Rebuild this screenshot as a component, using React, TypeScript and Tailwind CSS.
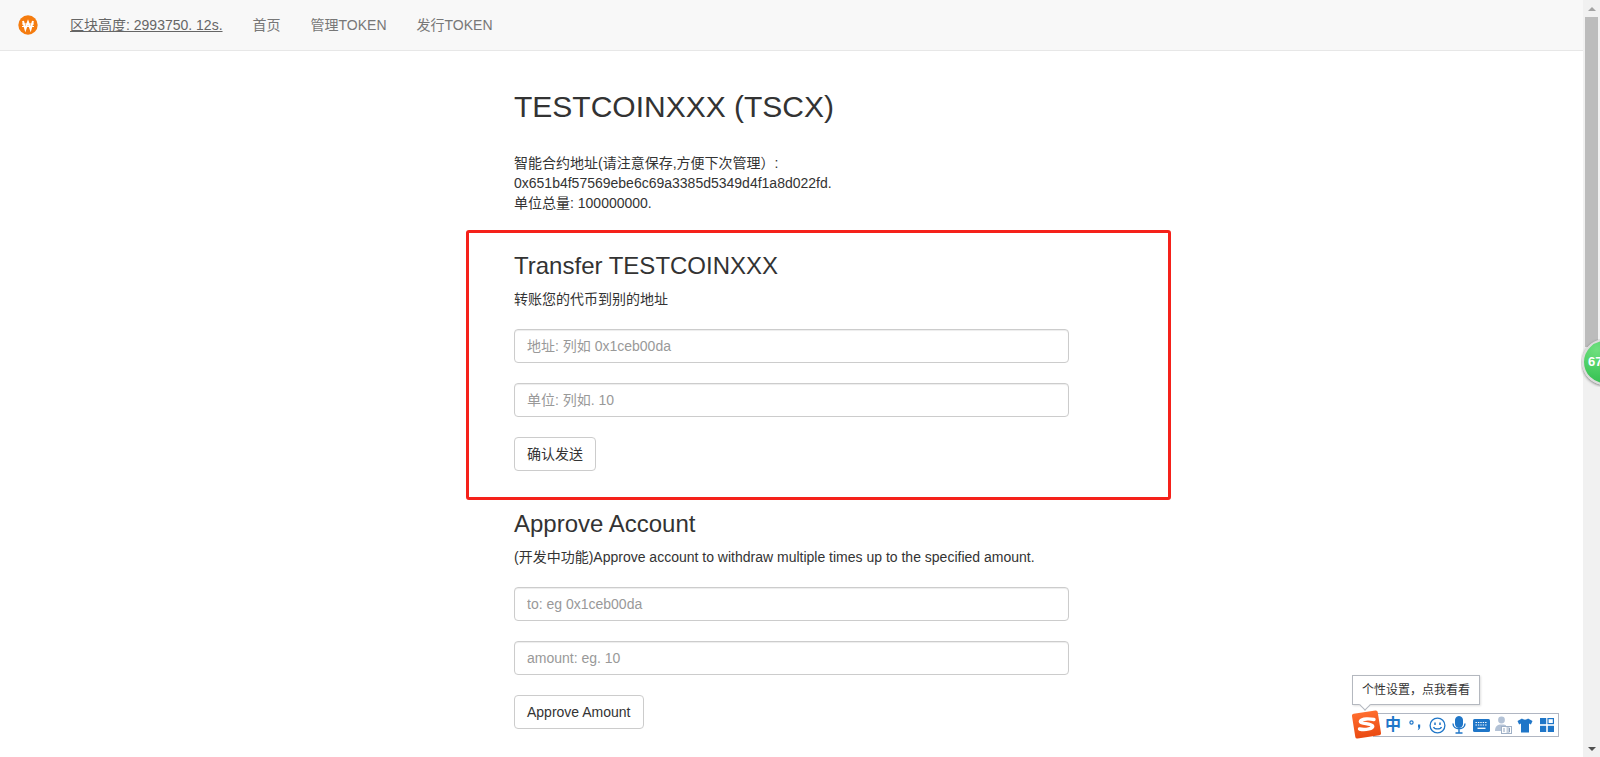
const FONT = "font-['Liberation_Sans','Noto_Sans_CJK_SC',sans-serif]"

const SECTIONS = [
  {
    title: 'Transfer TESTCOINXXX',
    desc: '转账您的代币到别的地址',
    fields: ['地址: 列如 0x1ceb00da', '单位: 列如. 10'],
    action: '确认发送',
  },
  {
    title: 'Approve Account',
    desc: '(开发中功能)Approve account to withdraw multiple times up to the specified amount.',
    fields: ['to: eg 0x1ceb00da', 'amount: eg. 10'],
    action: 'Approve Amount',
  },
]

function Logo() {
  return (
    <svg width="20" height="20" viewBox="0 0 20 20" className="shrink-0">
      <circle cx="10" cy="10" r="9.7" fill="#f57c0f" />
      <path d="M5 6l2.4 8 2.6-7 2.6 7L15 6" fill="none" stroke="#fff" strokeWidth="2" />
      <path d="M4 9h12M4 11.5h12" stroke="#fff" strokeWidth="1" />
    </svg>
  )
}

function Navbar() {
  return (
    <nav className="flex h-[51px] shrink-0 items-center border-b border-[#e7e7e7] bg-[#f8f8f8] pl-[18px] text-sm text-[#777]">
      <Logo />
      <div className="ml-[32px] flex items-center gap-[30px]">
        <a className="text-[#666] underline">区块高度: 2993750. 12s.</a>
        <a>首页</a>
        <a>管理TOKEN</a>
        <a>发行TOKEN</a>
      </div>
    </nav>
  )
}

function Section({ title, desc, fields, action }: (typeof SECTIONS)[number]) {
  return (
    <section className="mt-10">
      <h3 className="text-2xl leading-[26px] font-normal">{title}</h3>
      <p className="mt-[10px] leading-5">{desc}</p>
      {fields.map((f) => (
        <input
          key={f}
          placeholder={f}
          className="mt-5 block h-[34px] w-full rounded border border-[#ccc] bg-white px-3 text-sm shadow-[inset_0_1px_1px_rgba(0,0,0,0.075)] outline-none placeholder:text-[#999]"
        />
      ))}
      <button className="mt-5 block h-[34px] rounded border border-[#ccc] bg-white px-3 text-sm text-[#333]">
        {action}
      </button>
    </section>
  )
}

function Scrollbar() {
  return (
    <div className="flex w-[17px] shrink-0 flex-col items-center bg-[#f1f1f1]">
      <div className="flex h-[17px] shrink-0 items-center justify-center">
        <span className="h-0 w-0 border-x-[4px] border-b-[4px] border-x-transparent border-b-[#a3a3a3]" />
      </div>
      <div className="h-[330px] w-[13px] bg-[#bcbcbc]" />
      <div className="flex-1" />
      <div className="flex h-[17px] shrink-0 items-center justify-center">
        <span className="h-0 w-0 border-x-[4px] border-t-[4px] border-x-transparent border-t-[#505050]" />
      </div>
    </div>
  )
}

function SpeedBall() {
  return (
    <div className="absolute top-[339px] left-[1581px] h-[48px] w-[19px] overflow-hidden">
      <div className="ml-px flex h-[46px] w-[46px] items-center rounded-full border-2 border-[#dcdcdc] bg-[radial-gradient(circle_at_30%_20%,#6fe07f,#3fc75a_60%,#2fb04a)] pl-[4px] text-[13px] font-bold text-white shadow-[0_1px_3px_rgba(0,0,0,0.5)]">
        67
      </div>
    </div>
  )
}

const BLUE = '#1f76c8'

function ToolIcon({ children }: { children: React.ReactNode }) {
  return <div className="flex h-full w-[22px] shrink-0 items-center justify-center">{children}</div>
}

function ImeBar() {
  return (
    <div className="absolute top-[675px] left-[1352px] w-[207px]">
      {/* tooltip */}
      <div className="relative flex h-[30px] w-[128px] items-center justify-center border border-[#b4b8bf] bg-white text-xs text-[#333] shadow-[1px_1px_2px_rgba(0,0,0,0.12)]">
        个性设置，点我看看
        <span className="absolute -bottom-[5px] left-[8px] h-2 w-2 rotate-45 border-r border-b border-[#b4b8bf] bg-white" />
      </div>
      {/* toolbar */}
      <div className="relative mt-[8px] ml-[21px] flex h-[24px] w-[186px] items-center border border-[#b0b6c2] bg-white pl-[8px]">
        <svg width="29" height="29" viewBox="0 0 29 29" className="absolute -top-[4px] -left-[22px]">
          <defs>
            <linearGradient id="sg" x1="0" y1="0" x2="0" y2="1">
              <stop offset="0" stopColor="#ff6d2e" />
              <stop offset="1" stopColor="#ea4a12" />
            </linearGradient>
          </defs>
          <rect x="1.5" y="2" width="26" height="25" rx="2" fill="url(#sg)" transform="rotate(-9 14.5 14.5)" />
          <path d="M22 9.5c-4-.8-12-1.200-13.500 1.500-1.500 3 10 2.200 12 4.800 1.500 2.500-7 4.700-13 3.200" fill="none" stroke="#fff" strokeWidth="3.4" strokeLinecap="round" />
        </svg>
        <ToolIcon>
          <span className="text-[16px] leading-none font-bold text-[#1f76c8]">中</span>
        </ToolIcon>
        <ToolIcon>
          <svg width="14" height="14" viewBox="0 0 14 14">
            <circle cx="3.500" cy="4.500" r="1.600" fill="none" stroke={BLUE} strokeWidth="1.200" />
            <path d="M10 6.500h2.200v2.200c0 1.800-1 3-2.600 3.500.6-.8 1-1.600 1-2.700H10z" fill={BLUE} />
          </svg>
        </ToolIcon>
        <ToolIcon>
          <svg width="17" height="17" viewBox="0 0 17 17" fill="none" stroke={BLUE}>
            <circle cx="8.500" cy="8.500" r="7.400" strokeWidth="1.300" />
            <path d="M6 5.500v2.500M11 5.500v2.500" strokeWidth="1.500" />
            <path d="M4.500 10c1 2.600 7 2.600 8 0" strokeWidth="1.300" />
          </svg>
        </ToolIcon>
        <ToolIcon>
          <svg width="14" height="18" viewBox="0 0 14 18" fill="none" stroke={BLUE}>
            <rect x="3.500" y="0.500" width="7" height="11" rx="3.500" fill={BLUE} />
            <path d="M1 7.500c0 7 12 7 12 0M7 13v3.500M3.500 17h7" strokeWidth="1.400" />
          </svg>
        </ToolIcon>
        <ToolIcon>
          <svg width="17" height="13" viewBox="0 0 17 13">
            <rect width="17" height="13" rx="1.500" fill={BLUE} />
            <path d="M2.500 3.500h12M2.500 6h12" stroke="#fff" strokeWidth="1.200" strokeDasharray="1.400 1" />
            <path d="M4.500 9.300h8" stroke="#fff" strokeWidth="1.300" />
          </svg>
        </ToolIcon>
        <ToolIcon>
          <svg width="18" height="18" viewBox="0 0 18 18">
            <circle cx="7.500" cy="4" r="3.400" fill="#b3c2d6" />
            <path d="M1 15c0-5 2.500-6.500 6.500-6.500S12 9 12 10v5z" fill="#b3c2d6" />
            <rect x="7.500" y="10.500" width="10" height="7" fill="#fff" stroke="#9fb0c6" />
            <path d="M10 12v4M12.500 12h3v4h-3M12.500 14h3" fill="none" stroke="#8ea2bc" />
          </svg>
        </ToolIcon>
        <ToolIcon>
          <svg width="16" height="15" viewBox="0 0 16 15">
            <path d="M5 0.500L0.500 3l1.600 3.400L4 5.600V14.500h8V5.600l1.900.8L15.500 3 11 .5C10 2 6 2 5 .5z" fill={BLUE} />
          </svg>
        </ToolIcon>
        <ToolIcon>
          <svg width="14" height="14" viewBox="0 0 14 14" fill={BLUE}>
            <rect width="6.200" height="6.200" />
            <rect x="8" y="0.600" width="5.400" height="5" fill="none" stroke={BLUE} strokeWidth="1.200" />
            <rect y="7.800" width="6.200" height="6.200" />
            <rect x="7.800" y="7.800" width="6.200" height="6.200" />
          </svg>
        </ToolIcon>
      </div>
    </div>
  )
}

export default function App() {
  return (
    <div className={`${FONT} relative flex h-screen overflow-hidden bg-white text-sm text-[#333]`}>
      <div className="flex min-w-0 flex-1 flex-col overflow-hidden">
        <Navbar />
        <main className="mx-auto w-[555px]">
          <h1 className="mt-9 text-[30px] leading-[40px] font-normal">TESTCOINXXX (TSCX)</h1>
          <div className="mt-[26px] leading-5">
            <p>智能合约地址(请注意保存,方便下次管理）:</p>
            <p>0x651b4f57569ebe6c69a3385d5349d4f1a8d022fd.</p>
            <p>单位总量: 100000000.</p>
          </div>
          {SECTIONS.map((s) => (
            <Section key={s.title} {...s} />
          ))}
        </main>
      </div>
      <Scrollbar />

      {/* annotation drawn over the page */}
      <div className="absolute top-[230px] left-[466px] h-[270px] w-[705px] rounded-[3px] border-[3px] border-[#f5211a]" />
      <SpeedBall />
      <ImeBar />
    </div>
  )
}
